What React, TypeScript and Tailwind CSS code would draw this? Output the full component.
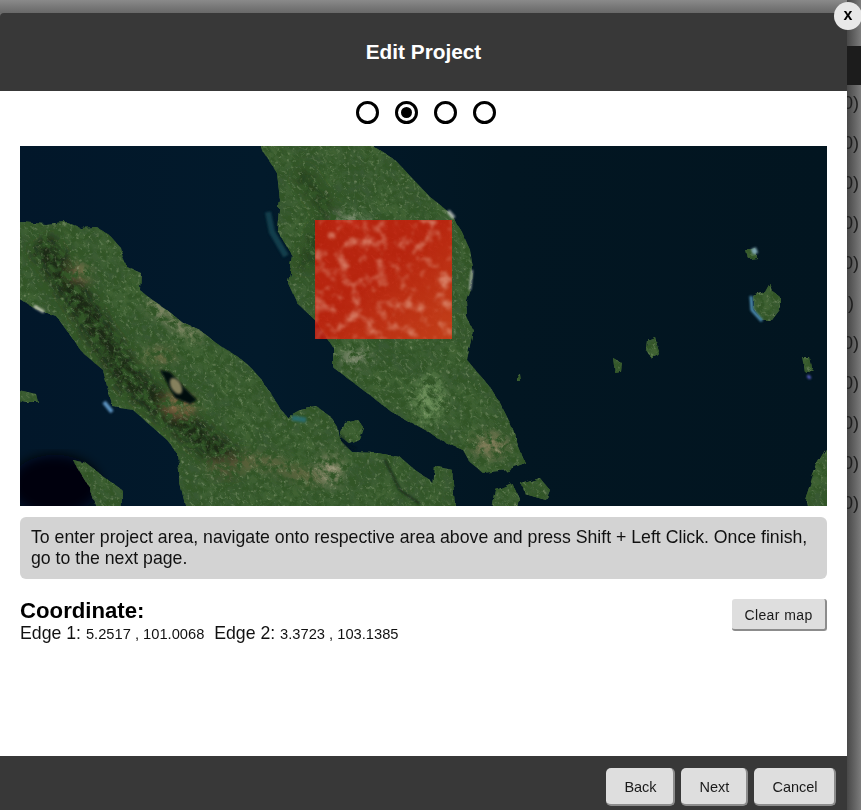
const font = { fontFamily: '"Liberation Sans", Arial, sans-serif' };

const sumatra =
  'M20 222 L45 224 L67 222 L80 228 L97 227 L110 236 L120 247 L123 258 L127 267 L141 273 L140 290 L152 300 L167 310 L182 322 L200 330 L215 342 L227 350 L242 360 L250 367 L262 380 L270 393 L280 408 L287 417 L300 410 L317 407 L330 416 L338 428 L340 440 L352 452 L377 453 L400 457 L415 470 L430 480 L442 495 L440 522 L190 522 L180 480 L177 453 L167 440 L150 425 L133 410 L113 407 L108 390 L103 370 L83 353 L70 335 L57 317 L37 310 L10 293 L10 222 Z';
const malaya =
  'M255 130 L373 130 L373 146 L395 160 L430 197 L450 213 L462 232 L470 250 L473 268 L472 283 L466 300 L467 317 L473 330 L470 345 L467 360 L478 373 L490 387 L500 403 L510 423 L518 445 L525 463 L507 470 L483 473 L470 462 L463 450 L440 440 L430 433 L393 413 L367 393 L333 367 L333 347 L315 320 L297 303 L288 283 L293 257 L277 230 L280 200 L277 173 L262 150 Z';
const islands = [
  'M753 296 L765 292 L770 283 L773 292 L781 298 L781 308 L772 320 L762 320 L753 308 Z',
  'M72 459 L85 462 L105 478 L122 490 L121 520 L100 520 L90 488 Z',
  'M840 440 L827 447 L818 462 L812 478 L805 500 L810 520 L840 520 Z',
  'M345 423 L358 420 L364 428 L360 440 L350 444 L340 436 Z',
  'M522 484 L540 478 L550 490 L546 500 L525 494 Z',
  'M496 490 L512 483 L520 500 L505 520 L490 520 Z',
  'M10 388 L36 394 L38 402 L26 402 L10 398 Z',
  'M265 146 L278 146 L280 152 L270 158 Z',
  'M647 340 L655 337 L659 352 L652 359 L646 350 Z',
  'M613 358 L622 363 L621 372 L615 373 Z',
  'M803 358 L810 358 L812 368 L806 373 Z',
  'M747 252 L756 249 L757 258 L749 259 Z',
  'M516 375 L519 373 L520 381 L516 381 Z',
  'M435 466 L452 470 L456 520 L430 520 Z',
];

function SatelliteMap() {
  return (
    <svg viewBox="20 146 807 360" className="block h-[360px] w-full">
      <defs>
        <linearGradient id="sea" x1="0" y1="0" x2="1" y2="0">
          <stop offset="0" stopColor="#02172a" />
          <stop offset="0.3" stopColor="#021a2b" />
          <stop offset="0.6" stopColor="#021622" />
          <stop offset="1" stopColor="#021520" />
        </linearGradient>
        <clipPath id="land">
          <path d={sumatra} />
          <path d={malaya} />
          {islands.map((d) => (
            <path key={d} d={d} />
          ))}
        </clipPath>
        <filter id="rough" x="-5%" y="-5%" width="110%" height="110%">
          <feTurbulence type="fractalNoise" baseFrequency="0.09" numOctaves="3" seed="4" />
          <feDisplacementMap in="SourceGraphic" scale="6" />
          <feGaussianBlur stdDeviation="0.7" />
        </filter>
        <filter id="mottle" x="0" y="0" width="100%" height="100%">
          <feTurbulence type="fractalNoise" baseFrequency="0.035" numOctaves="3" seed="21" />
          <feColorMatrix values="0 0 0 0 0.04  0 0 0 0 0.1  0 0 0 0 0.03  3.4 0 0 0 -1.1" />
        </filter>
        <filter id="canopy" x="0" y="0" width="100%" height="100%">
          <feTurbulence type="fractalNoise" baseFrequency="0.14" numOctaves="4" seed="8" />
          <feColorMatrix values="0 0 0 0 0.03  0 0 0 0 0.09  0 0 0 0 0.02  3 0 0 0 -1.1" />
        </filter>
        <filter id="fleck" x="0" y="0" width="100%" height="100%">
          <feTurbulence type="fractalNoise" baseFrequency="0.3" numOctaves="2" seed="15" />
          <feColorMatrix values="0 0 0 0 0.55  0 0 0 0 0.6  0 0 0 0 0.4  0 3 0 0 -1.7" />
          <feGaussianBlur stdDeviation="0.6" />
        </filter>
        <filter id="redfleck" x="0" y="0" width="100%" height="100%">
          <feTurbulence type="fractalNoise" baseFrequency="0.08" numOctaves="4" seed="37" />
          <feColorMatrix values="0 0 0 0 0.86  0 0 0 0 0.55  0 0 0 0 0.42  0 3.2 0 0 -1.6" />
          <feGaussianBlur stdDeviation="1" />
        </filter>
        <filter id="blur3">
          <feGaussianBlur stdDeviation="6" />
        </filter>
        <filter id="blur1">
          <feGaussianBlur stdDeviation="1.2" />
        </filter>
        <linearGradient id="redfade" x1="0" y1="0" x2="1" y2="1">
          <stop offset="0.45" stopColor="#d6762e" stopOpacity="0" />
          <stop offset="1" stopColor="#d6762e" stopOpacity="0.32" />
        </linearGradient>
      </defs>

      <rect x="20" y="146" width="807" height="360" fill="url(#sea)" />
      <ellipse cx="55" cy="485" rx="45" ry="30" fill="#01060e" filter="url(#blur3)" />

      <g filter="url(#rough)">
        <g clipPath="url(#land)">
          <rect x="0" y="120" width="860" height="410" fill="#3f6233" />
          <rect x="0" y="120" width="860" height="410" filter="url(#mottle)" />
          {/* ridges and highlands */}
          <g filter="url(#blur3)">
            <path d="M40 240 L85 310 L130 380 L190 430 L240 470" stroke="#1a2a16" strokeWidth="30" fill="none" />
            <path d="M300 170 L330 215 L300 270" stroke="#28431f" strokeWidth="20" fill="none" />
            <path d="M210 470 L260 460 L320 480" stroke="#6f6a45" strokeWidth="12" fill="none" opacity="0.8" />
            <path d="M150 302 L175 322 L200 338" stroke="#a8a184" strokeWidth="9" fill="none" />
            <ellipse cx="80" cy="272" rx="10" ry="6" fill="#8d7a52" />
            <ellipse cx="180" cy="405" rx="16" ry="9" fill="#8a6f48" />
            <ellipse cx="160" cy="355" rx="14" ry="6" fill="#80744d" />
            <ellipse cx="490" cy="445" rx="18" ry="12" fill="#807c58" />
            <ellipse cx="430" cy="400" rx="16" ry="24" fill="#6a8d58" />
            <ellipse cx="350" cy="220" rx="18" ry="6" fill="#8c9a80" />
            <ellipse cx="355" cy="357" rx="14" ry="10" fill="#7f8a70" />
            <ellipse cx="330" cy="470" rx="12" ry="14" fill="#9a9478" />
          </g>
          <rect x="0" y="120" width="860" height="410" filter="url(#canopy)" />
          <rect x="0" y="120" width="860" height="410" filter="url(#fleck)" opacity="0.35" />
        </g>
      </g>

      {/* shore shallows */}
      <g filter="url(#blur1)">
        <path d="M268 212 L272 232 L286 256" stroke="#1f5b68" strokeWidth="6" fill="none" opacity="0.55" />
        <path d="M751 296 L752 310 L762 321" stroke="#4f90b5" strokeWidth="3" fill="none" />
        <path d="M292 418 L306 420" stroke="#2a6a6a" strokeWidth="5" fill="none" />
        <path d="M448 211 L454 218" stroke="#c4cbc5" strokeWidth="4" fill="none" opacity="0.8" />
        <path d="M472 270 L470 290" stroke="#aeb6ae" strokeWidth="2" fill="none" />
        <path d="M34 306 L44 312" stroke="#c6cbb8" strokeWidth="3" fill="none" />
        <path d="M752 252 L757 250" stroke="#7fa7b4" strokeWidth="6" fill="none" />
        <path d="M104 402 L112 412" stroke="#5d94c2" strokeWidth="4" fill="none" />
        <path d="M810 376 L808 378" stroke="#5a62c8" strokeWidth="4" fill="none" />
      </g>

      {/* lake */}
      <path
        d="M160 370 L170 372 L182 385 L197 400 L190 404 L175 398 L168 385 Z"
        fill="#04090c"
        filter="url(#blur1)"
      />
      <ellipse cx="176" cy="386" rx="5" ry="9" transform="rotate(-30 176 386)" fill="#86815d" filter="url(#blur1)" />
      <g filter="url(#blur1)" opacity="0.7">
        <path d="M342 436 L346 446 L356 449" stroke="#04101a" strokeWidth="2" fill="none" />
        <path d="M385 460 L400 490 L420 504" stroke="#0a1a18" strokeWidth="2" fill="none" />
      </g>

      {/* selected project area */}
      <rect x="315" y="220" width="137" height="119" fill="#d01c0a" fillOpacity="0.84" />
      <rect x="315" y="220" width="137" height="119" fill="url(#redfade)" />
      <rect x="315" y="220" width="137" height="119" filter="url(#redfleck)" opacity="0.5" />
    </svg>
  );
}

function Radio({ active }: { active?: boolean }) {
  return (
    <span className="flex h-[23px] w-[23px] items-center justify-center rounded-full border-[3px] border-black bg-white">
      {active && <span className="h-[11px] w-[11px] rounded-full bg-black" />}
    </span>
  );
}

function FooterButton({ label, className }: { label: string; className: string }) {
  return (
    <button
      className={`flex h-[38px] items-center justify-center rounded-[5px] border-r-2 border-b-2 border-[#8c8c8c] bg-[#dedede] pt-[3px] pl-[2px] text-[14.5px] text-[#1a1a1a] ${className}`}
    >
      {label}
    </button>
  );
}

function SideRows() {
  const rows = ['0)', '0)', '0)', '0)', '0)', ')', '0)', '0)', '0)', '0)', '0)'];
  return (
    <div className="flex w-[14px] shrink-0 flex-col overflow-hidden bg-gradient-to-r from-[#484848] to-[#7c7c7c]">
      <div className="mt-[46px] h-[39px] shrink-0 bg-[#1c1c1c]" />
      <div className="-mt-[2px] flex flex-col">
        {rows.map((r, i) => (
          <div
            key={i}
            className={`flex h-[40px] shrink-0 items-center whitespace-nowrap text-[18px] leading-none text-[#1d1d1d] ${r === ')' ? 'pl-px' : '-ml-[4px]'}`}
          >
            {r}
          </div>
        ))}
      </div>
    </div>
  );
}

export default function App() {
  return (
    <div className="relative flex h-[810px] w-[861px] overflow-hidden bg-[#6e6e6e]" style={font}>
      <div className="flex h-[810px] w-[847px] shrink-0 flex-col">
        <div className="h-[13px] shrink-0 bg-gradient-to-b from-[#8a8a8a] to-[#686868]" />
        <header className="flex h-[78px] shrink-0 items-center justify-center rounded-tl-[4px] bg-[#383838] text-[20.8px] font-bold text-white">
          Edit Project
        </header>

        <main className="flex flex-1 flex-col bg-white px-5 text-black">
          <div className="mt-[10px] flex justify-center gap-4 pl-[5px]">
            <Radio />
            <Radio active />
            <Radio />
            <Radio />
          </div>

          <div className="mt-[22px] h-[360px] overflow-hidden">
            <SatelliteMap />
          </div>

          <p className="mt-[11px] h-[62px] rounded-[6px] bg-[#d3d3d3] px-[11px] pt-[10px] text-[17.7px] leading-[21px] text-[#111]">
            To enter project area, navigate onto respective area above and press Shift + Left Click. Once finish, go to
            the next page.
          </p>

          <div className="mt-5 flex items-start justify-between">
            <div>
              <h2 className="text-[22.2px] leading-[24px] font-bold">Coordinate:</h2>
              <div className="mt-px text-[17.7px] leading-[18px] whitespace-pre text-[#111]">
                Edge 1: <span className="text-[14.7px]">5.2517 , 101.0068</span>
                {'  '}Edge 2: <span className="text-[14.7px]">3.3723 , 103.1385</span>
              </div>
            </div>
            <button className="h-[32px] w-[95px] rounded-[3px] border-r-2 border-b-2 border-[#8c8c8c] bg-[#dedede] pt-[2px] text-[14px] tracking-[0.4px] text-[#1a1a1a]">
              Clear map
            </button>
          </div>
        </main>

        <footer className="flex h-[54px] shrink-0 justify-end gap-[6px] bg-[#383838] pt-3 pr-[11px]">
          <FooterButton label="Back" className="w-[69px]" />
          <FooterButton label="Next" className="w-[67px]" />
          <FooterButton label="Cancel" className="w-[82px]" />
        </footer>
      </div>

      <SideRows />

      <button className="absolute top-[2px] left-[834px] flex h-[28px] w-[28px] items-center justify-center rounded-full bg-[#e8e8e8] pb-[3px] text-[16px] leading-none font-bold text-black">
        x
      </button>
    </div>
  );
}
